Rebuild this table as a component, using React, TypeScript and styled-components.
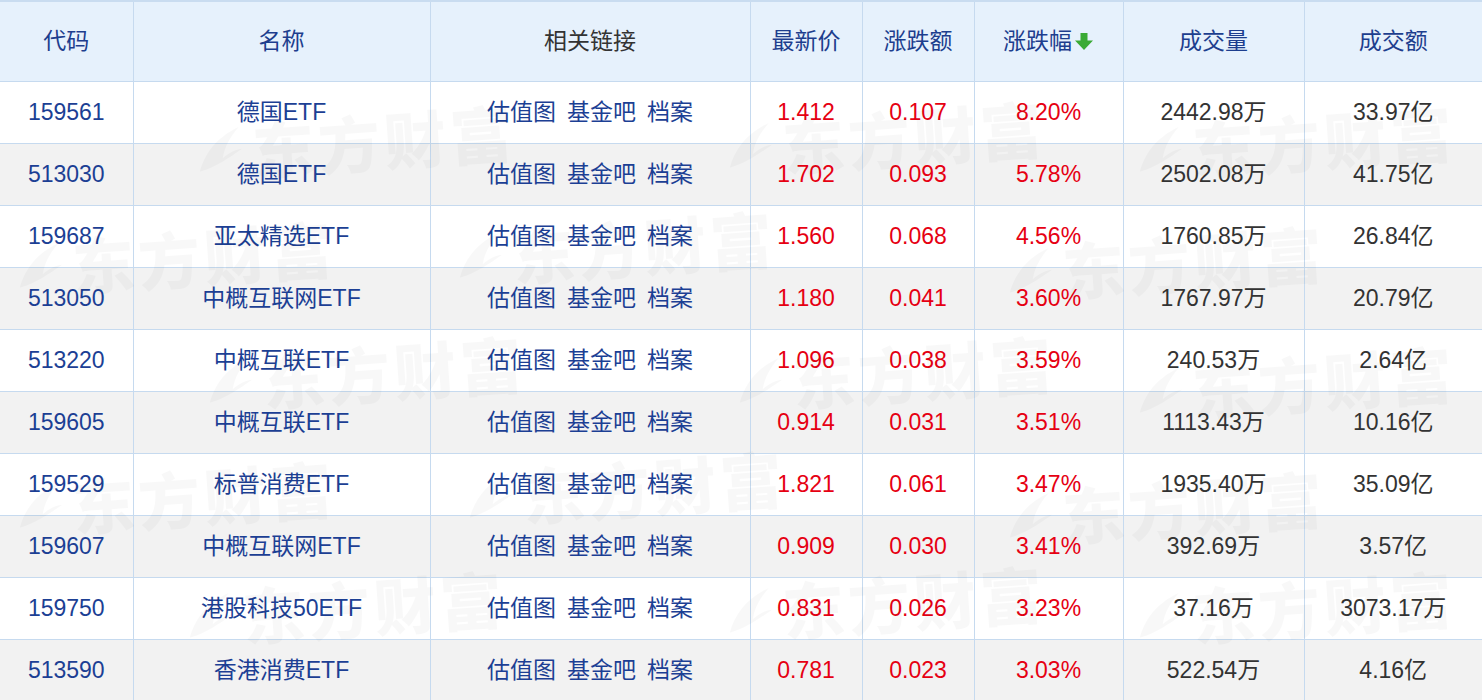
import * as React from "react";
import styled, { createGlobalStyle } from "styled-components";

const GlobalStyle = createGlobalStyle`
  html, body {
    margin: 0;
    padding: 0;
    background: #fff;
  }
  body {
    font-family: "Liberation Sans", "Noto Sans CJK SC", sans-serif;
    -webkit-font-smoothing: antialiased;
  }
`;

type Row = {
  code: string;
  name: string;
  price: string;
  change: string;
  pct: string;
  volume: string;
  amount: string;
};

const rows: Row[] = [
  { code: "159561", name: "德国ETF", price: "1.412", change: "0.107", pct: "8.20%", volume: "2442.98万", amount: "33.97亿" },
  { code: "513030", name: "德国ETF", price: "1.702", change: "0.093", pct: "5.78%", volume: "2502.08万", amount: "41.75亿" },
  { code: "159687", name: "亚太精选ETF", price: "1.560", change: "0.068", pct: "4.56%", volume: "1760.85万", amount: "26.84亿" },
  { code: "513050", name: "中概互联网ETF", price: "1.180", change: "0.041", pct: "3.60%", volume: "1767.97万", amount: "20.79亿" },
  { code: "513220", name: "中概互联ETF", price: "1.096", change: "0.038", pct: "3.59%", volume: "240.53万", amount: "2.64亿" },
  { code: "159605", name: "中概互联ETF", price: "0.914", change: "0.031", pct: "3.51%", volume: "1113.43万", amount: "10.16亿" },
  { code: "159529", name: "标普消费ETF", price: "1.821", change: "0.061", pct: "3.47%", volume: "1935.40万", amount: "35.09亿" },
  { code: "159607", name: "中概互联网ETF", price: "0.909", change: "0.030", pct: "3.41%", volume: "392.69万", amount: "3.57亿" },
  { code: "159750", name: "港股科技50ETF", price: "0.831", change: "0.026", pct: "3.23%", volume: "37.16万", amount: "3073.17万" },
  { code: "513590", name: "香港消费ETF", price: "0.781", change: "0.023", pct: "3.03%", volume: "522.54万", amount: "4.16亿" },
];

const widths = [133, 297, 320, 112, 112, 149, 181, 178];

const Wrapper = styled.div`
  position: relative;
  width: 1482px;
  height: 700px;
  overflow: hidden;
  background: #fff;
`;

const Table = styled.table`
  width: 1482px;
  border-collapse: collapse;
  table-layout: fixed;
  border-top: 2px solid #c9dcf0;
`;

const HeadRow = styled.tr`
  height: 80px;
  background: #e6f1fc;
`;

const HeadCell = styled.th<{ $muted?: boolean }>`
  padding: 0;
  font-size: 23px;
  line-height: 26px;
  font-weight: normal;
  color: ${(p) => (p.$muted ? "#333333" : "#1d3e8e")};
  text-align: center;
  border: 1px solid #c6daef;
  border-top: none;

  &:first-child {
    border-left: none;
  }
  &:last-child {
    border-right: none;
  }
`;

type BodyRowProps = { $striped: boolean };
const BodyRow = styled.tr<BodyRowProps>`
  height: 62px;
  background: ${(p) => (p.$striped ? "#f2f2f2" : "#ffffff")};
`;

type Tone = "blue" | "red" | "dark";
const toneColor: Record<Tone, string> = {
  blue: "#1c3f94",
  red: "#e60012",
  dark: "#333333",
};

const Cell = styled.td<{ $tone: Tone }>`
  padding: 0;
  font-size: 23px;
  line-height: 26px;
  text-align: center;
  color: ${(p) => toneColor[p.$tone]};
  border: 1px solid #c6daef;
  white-space: nowrap;

  &:first-child {
    border-left: none;
  }
  &:last-child {
    border-right: none;
  }
`;

const Links = styled.span`
  display: inline-flex;
  gap: 11px;

  a {
    color: #1c3f94;
    text-decoration: none;
  }
`;

const SortLabel = styled.span`
  display: inline-flex;
  align-items: center;
  gap: 2px;
`;

const Watermarks = styled.div`
  position: absolute;
  inset: 82px 0 0 0;
  overflow: hidden;
  pointer-events: none;
`;

const Mark = styled.div`
  position: absolute;
  display: flex;
  align-items: center;
  gap: 6px;
  font-family: "Noto Sans CJK SC", sans-serif;
  font-weight: 900;
  font-size: 62px;
  letter-spacing: 4px;
  color: rgba(0, 0, 0, 0.028);
  white-space: nowrap;
  transform: rotate(-4deg);
`;

const marks: [number, number][] = [
  [190, 14],
  [720, 10],
  [1130, 14],
  [10, 130],
  [450, 120],
  [1000, 135],
  [200, 245],
  [730, 245],
  [1130, 255],
  [10, 370],
  [460, 360],
  [1000, 380],
  [180, 480],
  [720, 475],
  [1130, 480],
];

const SortArrow = () => (
  <svg width="20" height="20" viewBox="0 0 20 20">
    <path d="M6.5 2h7v7.5H19L10 19 1 9.5h5.5z" fill="#3aaa35" />
  </svg>
);

const Logo = () => (
  <svg width="56" height="56" viewBox="0 0 56 56">
    <path
      d="M8 48C14 30 28 14 50 6c-10 10-16 20-18 30 8-6 14-8 20-8-14 8-26 16-44 20z"
      fill="rgba(0,0,0,0.028)"
    />
  </svg>
);

const App: React.FC = () => {
  return (
    <Wrapper>
      <GlobalStyle />
      <Table>
        <colgroup>
          {widths.map((w, i) => (
            <col key={i} style={{ width: w }} />
          ))}
        </colgroup>
        <thead>
          <HeadRow>
            <HeadCell>代码</HeadCell>
            <HeadCell>名称</HeadCell>
            <HeadCell $muted>相关链接</HeadCell>
            <HeadCell>最新价</HeadCell>
            <HeadCell>涨跌额</HeadCell>
            <HeadCell>
              <SortLabel>
                涨跌幅
                <SortArrow />
              </SortLabel>
            </HeadCell>
            <HeadCell>成交量</HeadCell>
            <HeadCell>成交额</HeadCell>
          </HeadRow>
        </thead>
        <tbody>
          {rows.map((r, i) => (
            <BodyRow key={r.code + i} $striped={i % 2 === 1}>
              <Cell $tone="blue">{r.code}</Cell>
              <Cell $tone="blue">{r.name}</Cell>
              <Cell $tone="blue">
                <Links>
                  <a href="#">估值图</a>
                  <a href="#">基金吧</a>
                  <a href="#">档案</a>
                </Links>
              </Cell>
              <Cell $tone="red">{r.price}</Cell>
              <Cell $tone="red">{r.change}</Cell>
              <Cell $tone="red">{r.pct}</Cell>
              <Cell $tone="dark">{r.volume}</Cell>
              <Cell $tone="dark">{r.amount}</Cell>
            </BodyRow>
          ))}
        </tbody>
      </Table>
      <Watermarks>
        {marks.map(([x, y], i) => (
          <Mark key={i} style={{ left: x, top: y }}>
            <Logo />
            东方财富
          </Mark>
        ))}
      </Watermarks>
    </Wrapper>
  );
};

export default App;
